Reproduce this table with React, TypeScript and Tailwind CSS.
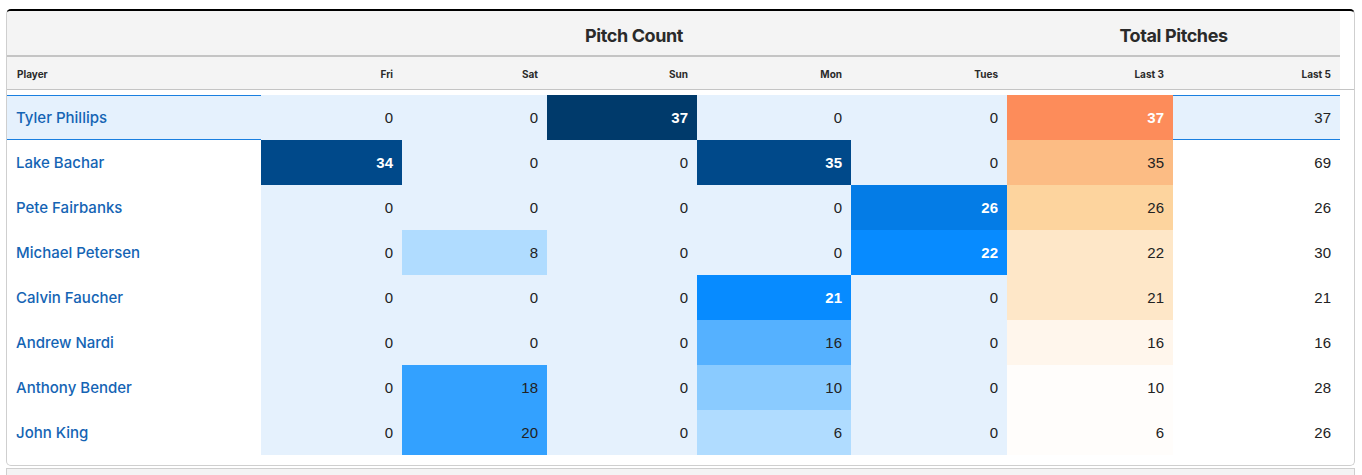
import React from 'react';

type Row = {
  name: string;
  days: number[];
  last3: number;
  last5: number;
};

const rows: Row[] = [
  { name: 'Tyler Phillips', days: [0, 0, 37, 0, 0], last3: 37, last5: 37 },
  { name: 'Lake Bachar', days: [34, 0, 0, 35, 0], last3: 35, last5: 69 },
  { name: 'Pete Fairbanks', days: [0, 0, 0, 0, 26], last3: 26, last5: 26 },
  { name: 'Michael Petersen', days: [0, 8, 0, 0, 22], last3: 22, last5: 30 },
  { name: 'Calvin Faucher', days: [0, 0, 0, 21, 0], last3: 21, last5: 21 },
  { name: 'Andrew Nardi', days: [0, 0, 0, 16, 0], last3: 16, last5: 16 },
  { name: 'Anthony Bender', days: [0, 18, 0, 10, 0], last3: 10, last5: 28 },
  { name: 'John King', days: [0, 20, 0, 6, 0], last3: 6, last5: 26 },
];

const dayLabels = ['Fri', 'Sat', 'Sun', 'Mon', 'Tues'];

// blue scale for daily pitch counts
function dayCell(v: number) {
  if (v >= 37) return 'bg-[#003a6b] text-white font-bold';
  if (v >= 30) return 'bg-[#00498a] text-white font-bold';
  if (v >= 25) return 'bg-[#047ce6] text-white font-bold';
  if (v >= 21) return 'bg-[#078bff] text-white font-bold';
  if (v >= 17) return 'bg-[#33a1ff] text-[#222]';
  if (v >= 12) return 'bg-[#55b1ff] text-[#222]';
  if (v >= 9) return 'bg-[#8acbff] text-[#222]';
  if (v >= 1) return 'bg-[#b0dcff] text-[#222]';
  return 'bg-[#e5f1fd] text-[#222]';
}

// orange scale for last 3 totals
function totalCell(v: number) {
  if (v >= 37) return 'bg-[#fd8c5a] text-white font-bold';
  if (v >= 30) return 'bg-[#fcbc84] text-[#222]';
  if (v >= 25) return 'bg-[#fdd49e] text-[#222]';
  if (v >= 20) return 'bg-[#fee7c8] text-[#222]';
  if (v >= 12) return 'bg-[#fff6ec] text-[#222]';
  return 'bg-[#fffdfb] text-[#222]';
}

function Cols() {
  return (
    <colgroup>
      <col className="w-[254px]" />
      <col className="w-[141px]" />
      <col className="w-[145px]" />
      <col className="w-[150px]" />
      <col className="w-[154px]" />
      <col className="w-[156px]" />
      <col className="w-[166px]" />
      <col className="w-[167px]" />
    </colgroup>
  );
}

export default function App() {
  return (
    <div className="min-h-[475px] bg-white pt-[9px] pl-[6px] pr-[7px]">
      <div className="rounded-[5px] border border-[#cfcfcf] border-t-2 border-t-black bg-white overflow-hidden h-[457px]">
        <div className="border-b border-[#c4c4c4]">
          <table className="table-fixed border-collapse w-[1333px] font-['Inter',sans-serif]">
            <Cols />
            <thead className="bg-[#f4f4f4] text-[#2a2a2a]">
              <tr className="h-[45px] border-b-2 border-[#c4c4c4]">
                <th />
                <th colSpan={5} className="pt-[5px] text-[18px] font-bold tracking-[-0.4px] text-center">
                  Pitch Count
                </th>
                <th colSpan={2} className="pt-[5px] text-[18px] font-bold tracking-[-0.4px] text-center">
                  Total Pitches
                </th>
              </tr>
              <tr className="h-[33px] text-[10px] font-bold">
                <th className="text-left pl-[10px] pt-[2px]">Player</th>
                {dayLabels.map((d) => (
                  <th key={d} className="text-right pr-[9px] pt-[2px]">
                    {d}
                  </th>
                ))}
                <th className="text-right pr-[9px] pt-[2px]">Last 3</th>
                <th className="text-right pr-[9px] pt-[2px]">Last 5</th>
              </tr>
            </thead>
          </table>
        </div>
        <table className="table-fixed border-collapse w-[1333px] mt-[5px]">
          <Cols />
          <tbody className="text-[15px] font-['Liberation_Sans',Arial,sans-serif]">
            {rows.map((r, idx) => {
              const hl = idx === 0;
              const edge = hl
                ? 'bg-[#e5f1fd] shadow-[inset_0_1px_0_#1a7fe0,inset_0_-1px_0_#1a7fe0]'
                : '';
              return (
                <tr key={r.name} className="h-[45px]">
                  <td
                    className={`pl-[9px] pt-[2px] text-[15px] font-medium text-[#1464b4] font-['Inter',sans-serif] ${edge}`}
                  >
                    {r.name}
                  </td>
                  {r.days.map((v, i) => (
                    <td key={i} className={`text-right pr-[9px] pt-[2px] ${dayCell(v)}`}>
                      {v}
                    </td>
                  ))}
                  <td className={`text-right pr-[9px] pt-[2px] ${totalCell(r.last3)}`}>{r.last3}</td>
                  <td className={`text-right pr-[9px] pt-[2px] text-[#222] ${edge}`}>{r.last5}</td>
                </tr>
              );
            })}
          </tbody>
        </table>
      </div>
      <div className="mt-[2px] h-[20px] border border-b-0 border-[#cfcfcf] bg-[#f4f4f4]" />
    </div>
  );
}
